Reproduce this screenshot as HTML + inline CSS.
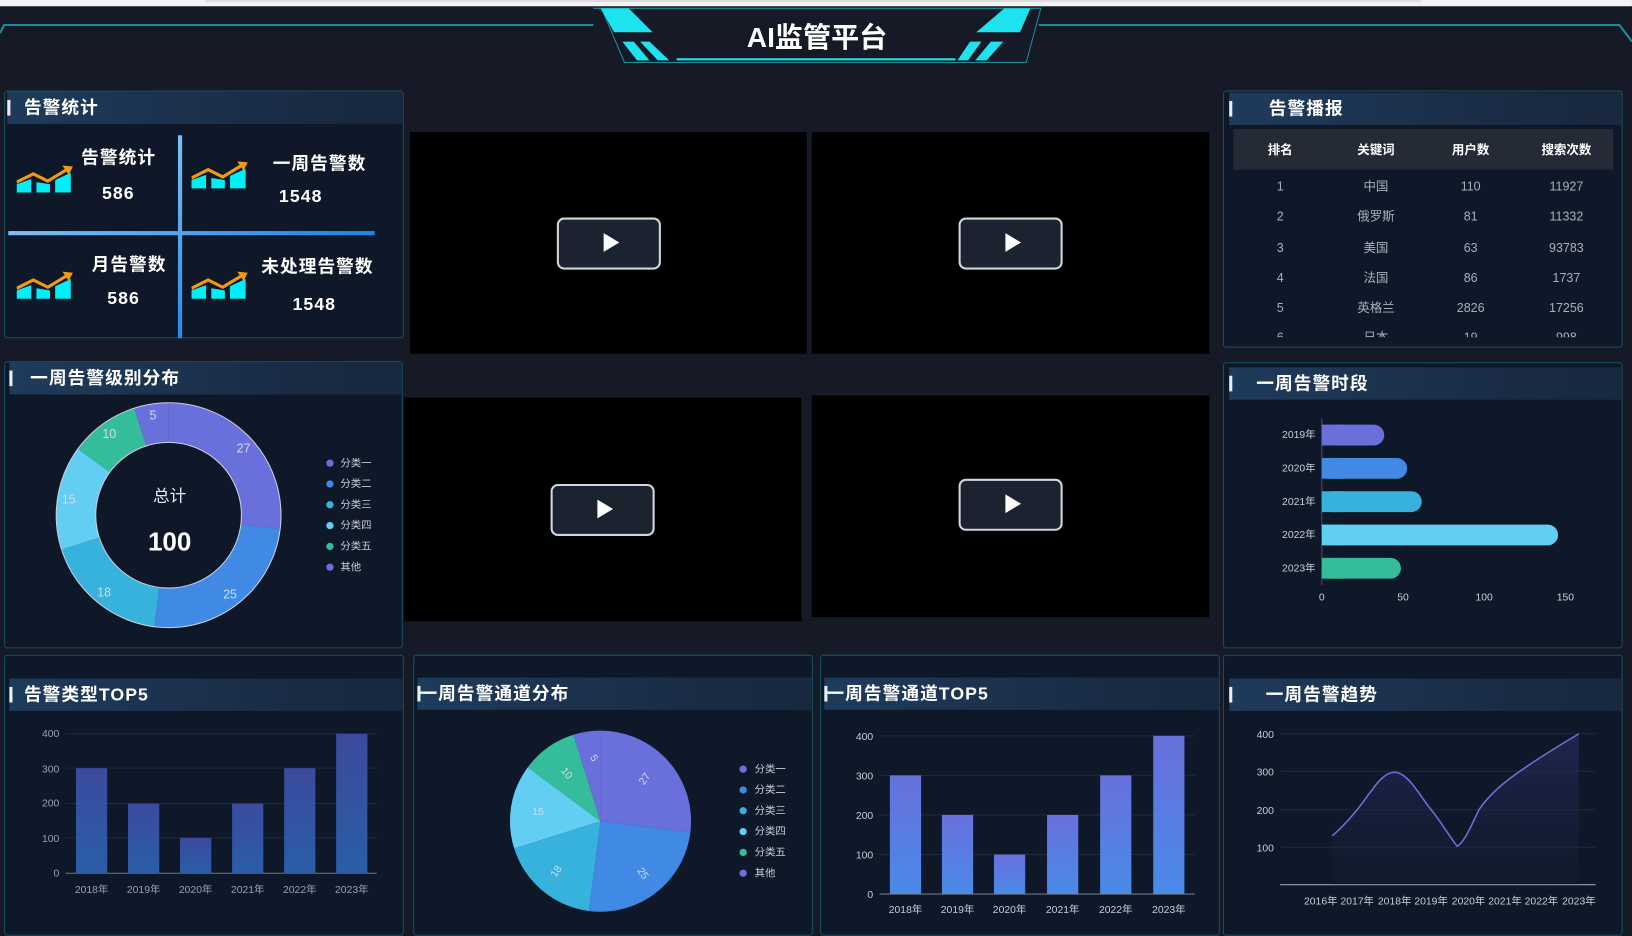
<!DOCTYPE html>
<html><head><meta charset="utf-8">
<style>
html,body{margin:0;padding:0;background:#161a27;overflow:hidden;width:1632px;height:926px}
#w{position:absolute;left:0;top:0;width:1568px;height:890px;transform:scale(1.0408);transform-origin:0 0;font-family:"Liberation Sans","Noto Sans CJK SC",sans-serif;color:#fff}
.p{position:absolute;background:#0f1828;border:1px solid #17505f;border-radius:3px;box-sizing:border-box}
.t{position:absolute;height:31px;background:linear-gradient(90deg,#1e3b5c,#1a2c45 70%,#17283f);font-weight:bold;font-size:17px;line-height:31px;letter-spacing:1px}
.t:before{content:"";position:absolute;left:0;top:8px;width:3px;height:15px;background:#e8eef5}
.v{position:absolute;background:#000}
.pb{position:absolute;left:50%;top:50%;width:96px;height:46px;margin:-25px 0 0 -50px;border:2px solid #cfd6de;border-radius:7px;background:#1c2330}
.pb:after{content:"";position:absolute;left:43px;top:13px;border-left:15px solid #fff;border-top:9px solid transparent;border-bottom:9px solid transparent}
.s{position:absolute;font-weight:bold;letter-spacing:1px}
svg text{font-family:"Liberation Sans","Noto Sans CJK SC",sans-serif}
</style></head><body><div id="w">
<div style="position:absolute;left:0;top:0;width:1568px;height:6px;background:#f3f3f3"></div>
<div style="position:absolute;left:197px;top:0;width:1168px;height:2px;background:#ddd"></div>
<svg style="position:absolute;left:0;top:0" width="1568" height="80">
<polyline points="0,32 4,24 570,24" fill="none" stroke="#1b8e9c" stroke-width="2"/>
<polyline points="998,24 1556,24 1568,40" fill="none" stroke="#1b8e9c" stroke-width="2"/>
<polygon points="570,8 578,8 600,60 986,60 1000,8 996,8" fill="none" stroke="#1b8e9c" stroke-width="1"/>
<polygon points="577,8 604,8 627,31 590,31" fill="#1ee2ee"/>
<polygon points="965,8 990,8 980,31 938,31" fill="#1ee2ee"/>
<polygon points="598,40 609,40 624,58 612,58" fill="#1ee2ee"/>
<polygon points="615,40 624,40 643,58 632,58" fill="#1ee2ee"/>
<polygon points="932,40 943,40 930,58 920,58" fill="#1ee2ee"/>
<polygon points="952,40 964,40 948,58 937,58" fill="#1ee2ee"/>
<line x1="650" y1="57" x2="918" y2="57" stroke="#1ee2ee" stroke-width="2"/>
<text x="785" y="45" text-anchor="middle" font-size="27" font-weight="bold" fill="#fff">AI监管平台</text>
</svg>

<!-- panel 1 -->
<div class="p" style="left:4px;top:87px;width:384px;height:238px"></div>
<div class="t" style="left:7px;top:88px;width:380px;padding-left:16px;box-sizing:border-box">告警统计</div>
<div style="position:absolute;left:171px;top:130px;width:4px;height:195px;background:linear-gradient(#7fbef5,#2a8ae8)"></div>
<div style="position:absolute;left:8px;top:222px;width:352px;height:4px;background:linear-gradient(90deg,#7fbef5,#1e82e8)"></div>
<svg width="0" height="0" style="position:absolute"><defs><g id="ic"><path d="M0,28 L0,20 L14,15 L14,28Z M19,28 L19,18 L32,20 L32,28Z M37,28 L37,16 L52,9 L52,28Z" fill="#00eef8"/><polyline points="0,18 16,10 30,17 48,6" fill="none" stroke="#f39a10" stroke-width="3"/><polygon points="44,2 54,3 50,11" fill="#f39a10"/></g></defs></svg>
<svg style="position:absolute;left:16px;top:157px" width="56" height="32"><use href="#ic"/></svg>
<svg style="position:absolute;left:184px;top:153px" width="56" height="32"><use href="#ic"/></svg>
<svg style="position:absolute;left:16px;top:259px" width="56" height="32"><use href="#ic"/></svg>
<svg style="position:absolute;left:184px;top:259px" width="56" height="32"><use href="#ic"/></svg>
<div class="s" style="left:78px;top:137px;font-size:17px">告警统计</div>
<div class="s" style="left:98px;top:176px;font-size:17px">586</div>
<div class="s" style="left:262px;top:143px;font-size:17px">一周告警数</div>
<div class="s" style="left:268px;top:179px;font-size:17px">1548</div>
<div class="s" style="left:88px;top:240px;font-size:17px">月告警数</div>
<div class="s" style="left:103px;top:277px;font-size:17px">586</div>
<div class="s" style="left:251px;top:242px;font-size:17px">未处理告警数</div>
<div class="s" style="left:281px;top:283px;font-size:17px">1548</div>

<!-- videos -->
<div class="v" style="left:394px;top:127px;width:381px;height:213px"><div class="pb"></div></div>
<div class="v" style="left:780px;top:127px;width:382px;height:213px"><div class="pb"></div></div>
<div class="v" style="left:388px;top:382px;width:382px;height:215px"><div class="pb"></div></div>
<div class="v" style="left:780px;top:380px;width:382px;height:213px"><div class="pb" style="margin-top:-27px"></div></div>

<!-- right table -->
<div class="p" style="left:1175px;top:87px;width:384px;height:247px"></div>
<div class="t" style="left:1181px;top:89px;width:377px;padding-left:38px;box-sizing:border-box">告警播报</div>
<div style="position:absolute;left:1185px;top:124px;width:365px;height:39px;background:#252a37"></div>
<svg style="position:absolute;left:1175px;top:124px" width="384" height="200" font-size="12">
<g font-weight="bold" fill="#fff" text-anchor="middle"><text x="55" y="24">排名</text><text x="147" y="24">关键词</text><text x="238" y="24">用户数</text><text x="330" y="24">搜索次数</text></g>
<g fill="#a9b0ba" text-anchor="middle">
<text x="55" y="59">1</text><text x="147" y="59">中国</text><text x="238" y="59">110</text><text x="330" y="59">11927</text>
<text x="55" y="88">2</text><text x="147" y="88">俄罗斯</text><text x="238" y="88">81</text><text x="330" y="88">11332</text>
<text x="55" y="118">3</text><text x="147" y="118">美国</text><text x="238" y="118">63</text><text x="330" y="118">93783</text>
<text x="55" y="147">4</text><text x="147" y="147">法国</text><text x="238" y="147">86</text><text x="330" y="147">1737</text>
<text x="55" y="176">5</text><text x="147" y="176">英格兰</text><text x="238" y="176">2826</text><text x="330" y="176">17256</text>
<text x="55" y="204">6</text><text x="147" y="204">日本</text><text x="238" y="204">19</text><text x="330" y="204">998</text></g>
</svg>

<!-- donut panel -->
<div class="p" style="left:4px;top:347px;width:383px;height:276px"></div>
<div class="t" style="left:9px;top:348px;width:377px;padding-left:20px;box-sizing:border-box">一周告警级别分布</div>
<svg style="position:absolute;left:0;top:380px" width="387" height="240">
<g transform="translate(162,115) rotate(-90)" fill="none" stroke-width="38">
<circle r="89" stroke="#6a70db" stroke-dasharray="151 600"/>
<circle r="89" stroke="#408ae6" stroke-dasharray="139.8 600" stroke-dashoffset="-151"/>
<circle r="89" stroke="#36b2dc" stroke-dasharray="100.7 600" stroke-dashoffset="-290.8"/>
<circle r="89" stroke="#63cef3" stroke-dasharray="83.9 600" stroke-dashoffset="-391.5"/>
<circle r="89" stroke="#35bd9b" stroke-dasharray="55.9 600" stroke-dashoffset="-475.4"/>
<circle r="89" stroke="#6a70db" stroke-dasharray="28 600" stroke-dashoffset="-531.3"/>
<circle r="108" stroke="#c8d0dc" stroke-width="1"/><circle r="70" stroke="#c8d0dc" stroke-width="1"/>
</g>
<g fill="#d5dbe8" font-size="12" text-anchor="middle"><text x="234" y="55">27</text><text x="221" y="195">25</text><text x="100" y="193">18</text><text x="66" y="104">15</text><text x="105" y="41">10</text><text x="147" y="23">5</text></g>
<text x="163" y="102" text-anchor="middle" font-size="16" fill="#e8ecf2">总计</text>
<text x="163" y="149" text-anchor="middle" font-size="25" font-weight="bold" fill="#fff">100</text>
<g font-size="10" fill="#c8cdd6">
<circle cx="317" cy="65" r="3.5" fill="#6a70db"/><text x="327" y="68">分类一</text>
<circle cx="317" cy="85" r="3.5" fill="#408ae6"/><text x="327" y="88">分类二</text>
<circle cx="317" cy="105" r="3.5" fill="#36b2dc"/><text x="327" y="108">分类三</text>
<circle cx="317" cy="125" r="3.5" fill="#63cef3"/><text x="327" y="128">分类四</text>
<circle cx="317" cy="145" r="3.5" fill="#35bd9b"/><text x="327" y="148">分类五</text>
<circle cx="317" cy="165" r="3.5" fill="#6a70db"/><text x="327" y="168">其他</text></g>
</svg>

<!-- hbar panel -->
<div class="p" style="left:1175px;top:348px;width:384px;height:275px"></div>
<div class="t" style="left:1181px;top:353px;width:377px;padding-left:26px;box-sizing:border-box">一周告警时段</div>
<svg style="position:absolute;left:1175px;top:390px" width="384" height="200" font-size="10">
<g fill="#c8cdd6" text-anchor="end"><text x="89" y="31">2019年</text><text x="89" y="63">2020年</text><text x="89" y="95">2021年</text><text x="89" y="127">2022年</text><text x="89" y="159">2023年</text></g>
<line x1="95" y1="12" x2="95" y2="172" stroke="#4a5262"/>
<rect x="95" y="18" width="60" height="20" rx="10" fill="#6a70db"/><rect x="95" y="18" width="20" height="20" fill="#6a70db"/>
<rect x="95" y="50" width="82" height="20" rx="10" fill="#408ae6"/><rect x="95" y="50" width="20" height="20" fill="#408ae6"/>
<rect x="95" y="82" width="96" height="20" rx="10" fill="#36b2dc"/><rect x="95" y="82" width="20" height="20" fill="#36b2dc"/>
<rect x="95" y="114" width="227" height="20" rx="10" fill="#63cef3"/><rect x="95" y="114" width="20" height="20" fill="#63cef3"/>
<rect x="95" y="146" width="76" height="20" rx="10" fill="#35bd9b"/><rect x="95" y="146" width="20" height="20" fill="#35bd9b"/>
<g fill="#c8cdd6" text-anchor="middle"><text x="95" y="187">0</text><text x="173" y="187">50</text><text x="251" y="187">100</text><text x="329" y="187">150</text></g>
</svg>

<!-- bottom panels -->
<div class="p" style="left:4px;top:629px;width:384px;height:270px"></div>
<div class="t" style="left:9px;top:652px;width:378px;padding-left:14px;box-sizing:border-box">告警类型TOP5</div>
<div class="p" style="left:397px;top:629px;width:384px;height:270px"></div>
<div class="t" style="left:401px;top:651px;width:379px;padding-left:2px;box-sizing:border-box">一周告警通道分布</div>
<div class="p" style="left:788px;top:629px;width:384px;height:270px"></div>
<div class="t" style="left:792px;top:651px;width:379px;padding-left:2px;box-sizing:border-box">一周告警通道TOP5</div>
<div class="p" style="left:1175px;top:629px;width:384px;height:270px"></div>
<div class="t" style="left:1181px;top:652px;width:377px;padding-left:35px;box-sizing:border-box">一周告警趋势</div>

<svg style="position:absolute;left:0;top:690px" width="390" height="200" font-size="10">
<defs><linearGradient id="g1" x1="0" y1="0" x2="0" y2="1"><stop offset="0" stop-color="#3b4a9c"/><stop offset="1" stop-color="#2a5ea6"/></linearGradient></defs>
<g stroke="#1f2a3c"><line x1="63" y1="15" x2="362" y2="15"/><line x1="63" y1="48" x2="362" y2="48"/><line x1="63" y1="82" x2="362" y2="82"/><line x1="63" y1="115" x2="362" y2="115"/></g>
<line x1="63" y1="149" x2="362" y2="149" stroke="#6c7585"/>
<g fill="#9aa2b0" text-anchor="end"><text x="57" y="18">400</text><text x="57" y="52">300</text><text x="57" y="85">200</text><text x="57" y="119">100</text><text x="57" y="152">0</text></g>
<g fill="url(#g1)"><rect x="73" y="48" width="30" height="101"/><rect x="123" y="82" width="30" height="67"/><rect x="173" y="115" width="30" height="34"/><rect x="223" y="82" width="30" height="67"/><rect x="273" y="48" width="30" height="101"/><rect x="323" y="15" width="30" height="134"/></g>
<g fill="#9aa2b0" text-anchor="middle"><text x="88" y="168">2018年</text><text x="138" y="168">2019年</text><text x="188" y="168">2020年</text><text x="238" y="168">2021年</text><text x="288" y="168">2022年</text><text x="338" y="168">2023年</text></g>
</svg>

<svg style="position:absolute;left:400px;top:690px" width="380" height="200" font-size="10">
<g transform="translate(177,99) rotate(-90)" fill="none" stroke-width="87">
<circle r="43.5" stroke="#6a70db" stroke-dasharray="73.8 300"/>
<circle r="43.5" stroke="#408ae6" stroke-dasharray="68.3 300" stroke-dashoffset="-73.8"/>
<circle r="43.5" stroke="#36b2dc" stroke-dasharray="49.2 300" stroke-dashoffset="-142.1"/>
<circle r="43.5" stroke="#63cef3" stroke-dasharray="41 300" stroke-dashoffset="-191.3"/>
<circle r="43.5" stroke="#35bd9b" stroke-dasharray="27.3 300" stroke-dashoffset="-232.3"/>
<circle r="43.5" stroke="#6a70db" stroke-dasharray="13.7 300" stroke-dashoffset="-259.6"/>
</g>
<g fill="#d5dbe8" text-anchor="middle"><text x="222" y="60" transform="rotate(-55 222 60)">27</text><text x="215" y="151" transform="rotate(55 215 151)">25</text><text x="137" y="149" transform="rotate(-55 137 149)">18</text><text x="117" y="93">15</text><text x="142" y="55" transform="rotate(50 142 55)">10</text><text x="168" y="40" transform="rotate(60 168 40)">5</text></g>
<g fill="#c8cdd6">
<circle cx="314" cy="49" r="3.5" fill="#6a70db"/><text x="325" y="52">分类一</text>
<circle cx="314" cy="69" r="3.5" fill="#408ae6"/><text x="325" y="72">分类二</text>
<circle cx="314" cy="89" r="3.5" fill="#36b2dc"/><text x="325" y="92">分类三</text>
<circle cx="314" cy="109" r="3.5" fill="#63cef3"/><text x="325" y="112">分类四</text>
<circle cx="314" cy="129" r="3.5" fill="#35bd9b"/><text x="325" y="132">分类五</text>
<circle cx="314" cy="149" r="3.5" fill="#6a70db"/><text x="325" y="152">其他</text></g>
</svg>

<svg style="position:absolute;left:790px;top:690px" width="380" height="200" font-size="10">
<defs><linearGradient id="g2" x1="0" y1="0" x2="0" y2="1"><stop offset="0" stop-color="#6870dc"/><stop offset="1" stop-color="#4a8ae8"/></linearGradient></defs>
<g stroke="#1f2a3c"><line x1="55" y1="17" x2="358" y2="17"/><line x1="55" y1="55" x2="358" y2="55"/><line x1="55" y1="93" x2="358" y2="93"/><line x1="55" y1="131" x2="358" y2="131"/></g>
<line x1="55" y1="169" x2="358" y2="169" stroke="#6c7585"/>
<g fill="#c8cdd6" text-anchor="end"><text x="49" y="21">400</text><text x="49" y="59">300</text><text x="49" y="97">200</text><text x="49" y="135">100</text><text x="49" y="173">0</text></g>
<g fill="url(#g2)"><rect x="65" y="55" width="30" height="114"/><rect x="115" y="93" width="30" height="76"/><rect x="165" y="131" width="30" height="38"/><rect x="216" y="93" width="30" height="76"/><rect x="267" y="55" width="30" height="114"/><rect x="318" y="17" width="30" height="152"/></g>
<g fill="#c8cdd6" text-anchor="middle"><text x="80" y="187">2018年</text><text x="130" y="187">2019年</text><text x="180" y="187">2020年</text><text x="231" y="187">2021年</text><text x="282" y="187">2022年</text><text x="333" y="187">2023年</text></g>
</svg>

<svg style="position:absolute;left:1175px;top:690px" width="384" height="200" font-size="10">
<defs><linearGradient id="g3" x1="0" y1="0" x2="0" y2="1"><stop offset="0" stop-color="#2a2f66" stop-opacity=".6"/><stop offset="1" stop-color="#1a2040" stop-opacity=".2"/></linearGradient></defs>
<g stroke="#1f2a3c"><line x1="55" y1="15" x2="358" y2="15"/><line x1="55" y1="51" x2="358" y2="51"/><line x1="55" y1="88" x2="358" y2="88"/><line x1="55" y1="124" x2="358" y2="124"/></g>
<line x1="55" y1="160" x2="358" y2="160" stroke="#9aa2b0"/>
<g fill="#c8cdd6" text-anchor="end"><text x="49" y="19">400</text><text x="49" y="55">300</text><text x="49" y="92">200</text><text x="49" y="128">100</text></g>
<path d="M105,113 C115,105 122,96 129,88 C142,72 152,52 165,52 C178,52 190,76 200,88 C210,100 215,110 225,123 C232,120 240,100 246,88 C258,70 275,55 342,15 L342,160 L105,160Z" fill="url(#g3)"/>
<path d="M105,113 C115,105 122,96 129,88 C142,72 152,52 165,52 C178,52 190,76 200,88 C210,100 215,110 225,123 C232,120 240,100 246,88 C258,70 275,55 342,15" fill="none" stroke="#6a70db" stroke-width="1.5"/>
<g fill="#c8cdd6" text-anchor="middle"><text x="94" y="179">2016年</text><text x="129" y="179">2017年</text><text x="165" y="179">2018年</text><text x="200" y="179">2019年</text><text x="236" y="179">2020年</text><text x="271" y="179">2021年</text><text x="306" y="179">2022年</text><text x="342" y="179">2023年</text></g>
</svg>
</div></body></html>
